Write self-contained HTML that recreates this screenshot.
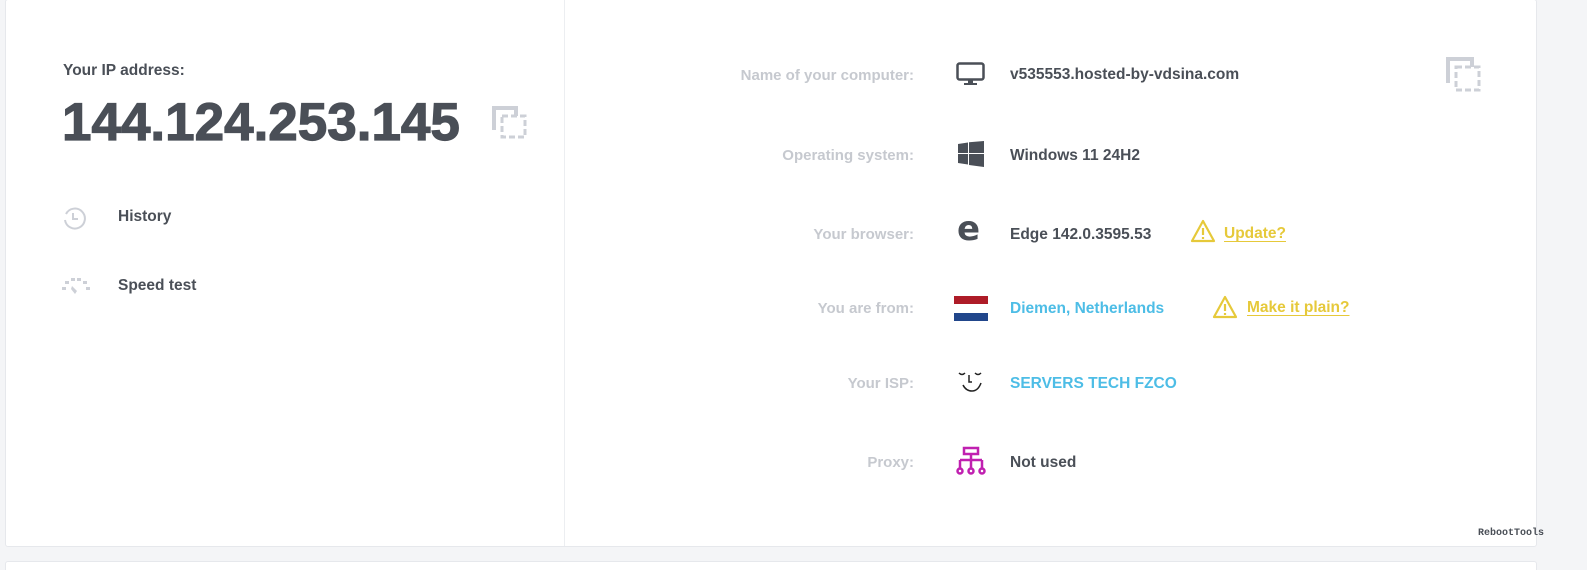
<!DOCTYPE html>
<html style="overflow:hidden;height:570px"><head><meta charset="utf-8"><style>
body{margin:0;width:1587px;height:570px;background:#f4f5f7;font-family:"Liberation Sans",sans-serif;position:relative;overflow:hidden}
.card{position:absolute;left:5px;top:-1px;width:1530px;height:546px;background:#fff;border:1px solid #e6e8ec;border-radius:3px}
.card2{position:absolute;left:5px;top:561px;width:1530px;height:8px;background:#fff;border:1px solid #e6e8ec;border-bottom:none;border-radius:3px 3px 0 0}
.div{position:absolute;left:564px;top:0;width:1px;height:546px;background:#eceef1}
.t{position:absolute;white-space:nowrap;font-weight:bold}
.lab{position:absolute;right:673px;color:#c6c9cf;font-size:15px;font-weight:bold;white-space:nowrap}
.val{position:absolute;left:1010px;color:#4a4f57;font-size:15.5px;font-weight:bold;white-space:nowrap}
.blue{color:#4dbde6}
.warn{position:absolute;color:#e6c93a;font-size:15.5px;font-weight:bold;text-decoration:underline;text-underline-offset:3px}
svg{position:absolute}
</style></head><body>
<div class="card"></div><div class="card2"></div><div class="div"></div>
<div class="t" style="left:63px;top:62px;font-size:15.5px;color:#4a4f57">Your IP address:</div>
<div class="t" style="left:62px;top:92px;font-size:53px;color:#4a4f57;-webkit-text-stroke:1.2px #4a4f57">144.124.253.145</div>
<svg style="left:492px;top:106px" width="36" height="34" viewBox="0 0 36 34"><path d="M2 24V2h22v8" fill="none" stroke="#cdd0d7" stroke-width="4"/><rect x="10" y="10" width="23" height="21" fill="none" stroke="#cdd0d7" stroke-width="3" stroke-dasharray="6 3"/></svg>
<svg style="left:62px;top:206px" width="24" height="24" viewBox="0 0 24 24"><path d="M4 8A10 10 0 1 1 3 14" fill="none" stroke="#cdd0d7" stroke-width="2"/><path d="M11 7v6h5" fill="none" stroke="#cdd0d7" stroke-width="2"/></svg>
<div class="t" style="left:118px;top:208px;font-size:15.5px;color:#4a4f57">History</div>
<svg style="left:62px;top:277px" width="28" height="18" viewBox="0 0 28 18"><g fill="#cdd0d7"><rect x="0" y="10" width="4" height="3"/><rect x="3" y="4" width="4" height="3"/><rect x="9" y="1" width="4" height="3"/><rect x="15" y="1" width="4" height="3"/><rect x="21" y="4" width="4" height="3"/><rect x="24" y="10" width="4" height="3"/><path d="M10 9l5 5-2 3-4-5z"/></g></svg>
<div class="t" style="left:118px;top:277px;font-size:15.5px;color:#4a4f57">Speed test</div>

<div class="lab" style="top:67px">Name of your computer:</div>
<div class="lab" style="top:147px">Operating system:</div>
<div class="lab" style="top:226px">Your browser:</div>
<div class="lab" style="top:300px">You are from:</div>
<div class="lab" style="top:375px">Your ISP:</div>
<div class="lab" style="top:454px">Proxy:</div>

<svg style="left:956px;top:62px" width="30" height="24" viewBox="0 0 30 24"><rect x="1.5" y="1.5" width="26" height="16" rx="2" fill="none" stroke="#4a4f57" stroke-width="2.5"/><rect x="12" y="18" width="5" height="3" fill="#4a4f57"/><rect x="8" y="21" width="13" height="2" fill="#4a4f57"/></svg>
<div class="val" style="top:66px">v535553.hosted-by-vdsina.com</div>
<svg style="left:1446px;top:57px" width="36" height="36" viewBox="0 0 36 36"><path d="M2 26V2h24v8" fill="none" stroke="#cdd0d7" stroke-width="4"/><rect x="10" y="10" width="23" height="23" fill="none" stroke="#cdd0d7" stroke-width="3" stroke-dasharray="6 3"/></svg>

<svg style="left:958px;top:141px" width="26" height="26" viewBox="0 0 26 26"><path fill="#4a4f57" d="M0 3l10-1.5V12H0zM11 1.3L26 0v12H11zM0 13h10v10.5L0 22zM11 13h15v13l-15-2z"/></svg>
<div class="val" style="top:147px">Windows 11 24H2</div>

<div class="t" style="left:957px;top:209px;font-size:34px;color:#4a4f57;font-family:'DejaVu Sans',sans-serif">e</div>
<div class="val" style="top:226px">Edge 142.0.3595.53</div>
<svg style="left:1190px;top:219px" width="26" height="24" viewBox="0 0 26 24"><path d="M13 2L24 22H2z" fill="none" stroke="#e6c93a" stroke-width="2.2" stroke-linejoin="round"/><path d="M13 9v7M13 18v2" stroke="#e6c93a" stroke-width="2.2"/></svg>
<div class="warn" style="left:1224px;top:225px">Update?</div>

<svg style="left:954px;top:296px" width="34" height="25" viewBox="0 0 34 25"><rect width="34" height="8" fill="#ae1c28"/><rect y="8" width="34" height="9" fill="#fff"/><rect y="17" width="34" height="8" fill="#21468b"/></svg>
<div class="val blue" style="top:300px">Diemen, Netherlands</div>
<svg style="left:1212px;top:295px" width="26" height="24" viewBox="0 0 26 24"><path d="M13 2L24 22H2z" fill="none" stroke="#e6c93a" stroke-width="2.2" stroke-linejoin="round"/><path d="M13 9v7M13 18v2" stroke="#e6c93a" stroke-width="2.2"/></svg>
<div class="warn" style="left:1247px;top:299px">Make it plain?</div>

<svg style="left:958px;top:370px" width="26" height="24" viewBox="0 0 26 24"><path d="M1 3q3 3 6 0M17 3q3 3 6 0M11 5v7h3M5 15q3 6 9 6t9-8" fill="none" stroke="#222" stroke-width="1.5"/></svg>
<div class="val blue" style="top:375px">SERVERS TECH FZCO</div>

<svg style="left:955px;top:446px" width="32" height="30" viewBox="0 0 32 30"><g fill="none" stroke="#c020b0" stroke-width="2.5"><rect x="9" y="2" width="14" height="6"/><path d="M16 8v6M5 14h22M5 14v8M16 14v8M27 14v8"/><circle cx="5" cy="25" r="2.5"/><circle cx="16" cy="25" r="2.5"/><circle cx="27" cy="25" r="2.5"/></g></svg>
<div class="val" style="top:454px">Not used</div>

<div style="position:absolute;left:1478px;top:528px;font-family:'Liberation Mono',monospace;font-size:10px;font-weight:bold;color:#4a4f57">RebootTools</div>
</body></html>
